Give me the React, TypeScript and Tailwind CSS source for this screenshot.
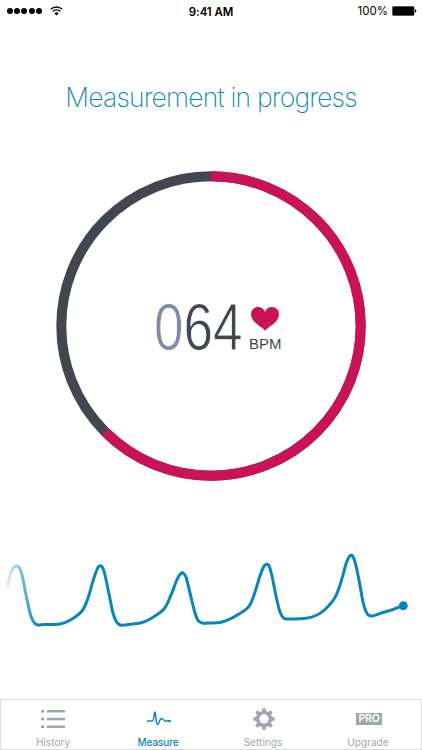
import type { ReactNode } from 'react';

type Point = [number, number];

const PULSE: Point[] = [
  [7, 47], [11, 32], [14, 27], [17, 26], [20, 29], [22.5, 37], [26, 55], [30, 73], [33, 81], [37, 84.7], [45, 84.6], [60, 84], [70, 80.3], [82, 71],
  [88, 58], [93, 41], [97, 29.5], [99, 26.3], [102, 26.6], [105, 35], [109, 54], [113, 73], [116, 81], [120, 85], [127, 84.7], [141, 82.8], [150, 79],
  [164, 69], [171, 55], [177, 39.5], [180, 34.5], [182.5, 32.7], [186, 37], [190, 53], [195, 73], [198, 80.3], [202, 83],
  [211, 83], [221, 82.2], [232, 78], [248, 67.5], [254, 55], [259, 39], [263, 28], [266, 24.5], [269, 25.7], [272, 36], [276, 56], [280, 72], [284, 78.3],
  [290, 79], [306, 78.3], [316, 75.5], [325, 69.5], [335, 57.5], [341, 42], [346, 24], [349, 17], [352, 15.5], [355, 22], [359, 40], [363, 62], [367, 73.5], [372, 76],
  [383, 72.5], [393, 69.5], [403, 65.7],
];

// Catmull-Rom spline through the sampled points.
function smooth(points: Point[]) {
  let d = `M${points[0][0]} ${points[0][1]}`;
  for (let i = 0; i < points.length - 1; i++) {
    const a = points[Math.max(0, i - 1)];
    const b = points[i];
    const c = points[i + 1];
    const e = points[Math.min(points.length - 1, i + 2)];
    d += `C${b[0] + (c[0] - a[0]) / 6} ${b[1] + (c[1] - a[1]) / 6} ${c[0] - (e[0] - b[0]) / 6} ${c[1] - (e[1] - b[1]) / 6} ${c[0]} ${c[1]}`;
  }
  return d;
}

function StatusBar() {
  return (
    <header className="grid h-[22px] grid-cols-3 items-center pl-[7px] pr-[5px] font-['Inter',sans-serif] text-black">
      <div className="flex items-center gap-[8px]">
        <div className="flex gap-[1.2px]">
          {[0, 1, 2, 3, 4].map((i) => (
            <span key={i} className="size-[6px] rounded-full bg-black" />
          ))}
        </div>
        <svg width="13" height="10" viewBox="0 0 13 10" fill="none" stroke="black" strokeWidth="1.4">
          <path d="M.8 3.3a8.2 8.2 0 0 1 11.4 0M2.7 5.4a5.4 5.4 0 0 1 7.6 0" />
          <path d="M4.3 7.2a3.2 3.2 0 0 1 4.4 0L6.5 9.5z" fill="black" stroke="none" />
        </svg>
      </div>
      <div className="pr-[2px] pt-[2px] text-center text-[11.5px] font-semibold leading-[16px] tracking-[-0.1px]">9:41 AM</div>
      <div className="flex items-center justify-end gap-[4px]">
        <span className="pt-[1px] text-[11.5px]">100%</span>
        <svg width="25" height="10" viewBox="0 0 25 10">
          <rect x=".5" y=".5" width="21.5" height="9" rx="1" stroke="#555" />
          <rect x="1" y="1" width="20.5" height="8" />
          <path d="M23 3.3q1.3.3 1.3 1.7T23 6.7z" />
        </svg>
      </div>
    </header>
  );
}

function Gauge() {
  return (
    <section className="mx-auto mt-[54px] grid size-[310px] place-items-center">
      <svg className="col-start-1 row-start-1" width="310" height="310" viewBox="0 0 310 310" fill="none" strokeWidth="10">
        <circle cx="155" cy="155" r="149.7" stroke="#414750" />
        <circle cx="155" cy="155" r="149.7" stroke="#ca1256" pathLength="1000" strokeDasharray="625 375" transform="rotate(-90 155 155)" />
      </svg>
      <div className="col-start-1 row-start-1 flex h-[64px] w-[130px] items-center pl-[8px] pt-[4px]">
        <div className="w-[95px] shrink-0 pb-[3px]">
          <div className="w-max origin-left scale-x-[0.805] font-['Liberation_Sans',sans-serif] text-[66px] leading-[64px] text-[#414750] [-webkit-text-stroke:0.9px_white]">
            <span className="text-[#7e8da3]">0</span>64
          </div>
        </div>
        <div className="flex flex-col items-center pt-[1px]">
          <svg width="30" height="26" viewBox="0 0 30 26">
            <path d="M15 25C13 21 1 17 1 8.2C1 4 4.1 1 8 1C11.4 1 14.2 3.2 15 6.2C15.8 3.2 18.6 1 22 1C25.9 1 29 4 29 8.2C29 17 17 21 15 25Z" fill="#ca1256" />
          </svg>
          <span className="mt-[4px] font-['Liberation_Sans',sans-serif] text-[15px] leading-[16px] text-[#414750]">BPM</span>
        </div>
      </div>
    </section>
  );
}

function PulseChart() {
  return (
    <svg className="mt-[59px] block" width="422" height="100" viewBox="0 0 422 100">
      <defs>
        <linearGradient id="trail" gradientUnits="userSpaceOnUse" x1="5" y1="0" x2="38" y2="0">
          <stop stopColor="#0985bd" stopOpacity=".08" />
          <stop offset=".5" stopColor="#0985bd" stopOpacity=".55" />
          <stop offset="1" stopColor="#0985bd" />
        </linearGradient>
      </defs>
      <path d={smooth(PULSE)} fill="none" stroke="url(#trail)" strokeWidth="3" strokeLinejoin="round" />
      <circle cx="403.3" cy="65.7" r="4.5" fill="#0985bd" />
    </svg>
  );
}

function Tab({ label, active, children }: { label: string; active?: boolean; children: ReactNode }) {
  return (
    <div className={`flex flex-col items-center pr-[1px] ${active ? 'text-[#0985bd]' : 'text-[#9da5b3]'}`}>
      <div className="mt-[6px] flex h-[26px] items-center pl-[2px]">{children}</div>
      <span className={`mt-[4px] font-['Inter',sans-serif] text-[10px] leading-[13px] ${active ? 'font-medium tracking-[-0.1px]' : 'tracking-[0.05px]'}`}>{label}</span>
    </div>
  );
}

function TabBar() {
  return (
    <nav className="mt-auto grid h-[51px] grid-cols-4 border border-[#dcdddd]">
      <Tab label="History">
        <svg width="26" height="20" viewBox="1 0 26 20" fill="currentColor">
          {[1, 8.7, 16.4].map((y) => (
            <g key={y}>
              <rect x="1" y={y} width="3" height="2.6" />
              <rect x="7" y={y} width="18" height="2.6" rx=".4" />
            </g>
          ))}
        </svg>
      </Tab>
      <Tab label="Measure" active>
        <svg width="26" height="20" viewBox="0 0 26 20" fill="none" stroke="currentColor" strokeWidth="1.5" strokeLinejoin="round">
          <path d="M1 12H6.2C7.4 12 7.8 9 8.2 6.2Q8.8 .2 9.5 5.5C10 9.5 10.4 15.5 11.6 15.5C13 15.5 13.4 9.4 15.5 9.4C17.4 9.4 17.4 12 19.5 12H24" />
          <circle cx="23.7" cy="12" r="1.3" fill="currentColor" stroke="none" />
        </svg>
      </Tab>
      <Tab label="Settings">
        <svg width="22" height="22" viewBox="-11 -11 22 22" fill="currentColor">
          <circle r="6.4" fill="none" stroke="currentColor" strokeWidth="3.4" />
          {[0, 45, 90, 135, 180, 225, 270, 315].map((a) => (
            <path key={a} d="M-2.2-7L-1.6-10.7H1.6L2.2-7z" transform={`rotate(${a})`} />
          ))}
        </svg>
      </Tab>
      <Tab label="Upgrade">
        <span className="flex h-[12px] w-[26px] items-center justify-center bg-[#9da5b3] font-['Inter',sans-serif] text-[10.5px] font-semibold leading-[12px] tracking-[-0.2px] text-white">PRO</span>
      </Tab>
    </nav>
  );
}

export default function App() {
  return (
    <main className="flex h-[750px] w-[422px] flex-col overflow-hidden bg-white">
      <StatusBar />
      <h1 className="mt-[55px] whitespace-nowrap text-center font-['Inter',sans-serif] text-[26.5px] font-extralight leading-[40px] tracking-[-0.8px] text-[#0985bd]">
        Measurement in progress
      </h1>
      <Gauge />
      <PulseChart />
      <TabBar />
    </main>
  );
}
